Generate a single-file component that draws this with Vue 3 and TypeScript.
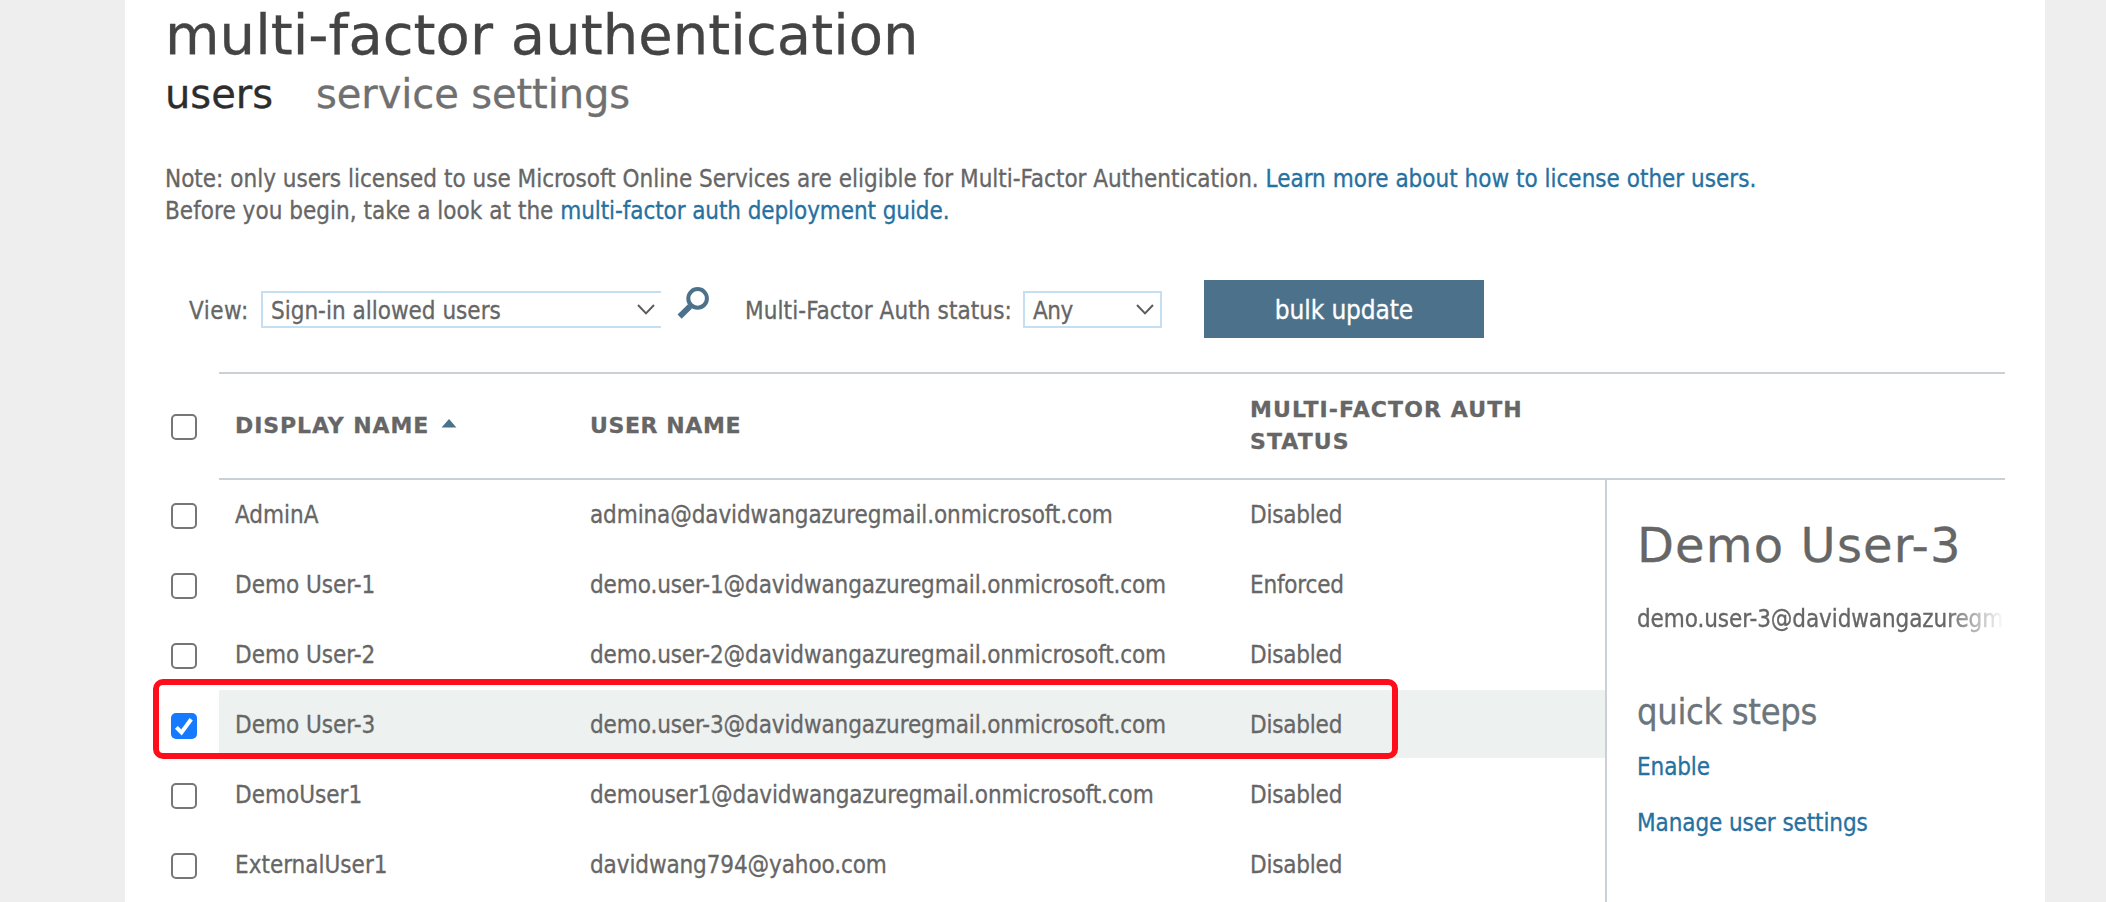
<script setup lang="ts">
import { computed, ref } from 'vue'

interface User {
  name: string
  email: string
  status: 'Disabled' | 'Enforced' | 'Enabled'
}

const users: User[] = [
  { name: 'AdminA', email: 'admina@davidwangazuregmail.onmicrosoft.com', status: 'Disabled' },
  { name: 'Demo User-1', email: 'demo.user-1@davidwangazuregmail.onmicrosoft.com', status: 'Enforced' },
  { name: 'Demo User-2', email: 'demo.user-2@davidwangazuregmail.onmicrosoft.com', status: 'Disabled' },
  { name: 'Demo User-3', email: 'demo.user-3@davidwangazuregmail.onmicrosoft.com', status: 'Disabled' },
  { name: 'DemoUser1', email: 'demouser1@davidwangazuregmail.onmicrosoft.com', status: 'Disabled' },
  { name: 'ExternalUser1', email: 'davidwang794@yahoo.com', status: 'Disabled' },
]

const selectedIndex = ref(3)
const selected = computed(() => users[selectedIndex.value])
</script>

<template>
  <div class="page">
    <main class="sheet">
      <h1 class="title">multi-factor authentication</h1>
      <nav class="tabs">
        <a class="tab active">users</a>
        <a class="tab settings">service settings</a>
      </nav>

      <div class="note">
        <p>Note: only users licensed to use Microsoft Online Services are eligible for Multi-Factor Authentication. <a class="learn">Learn more about how to license other users.</a></p>
        <p><span class="before">Before you begin, take a look at the</span> <a class="guide">multi-factor auth deployment guide.</a></p>
      </div>

      <div class="toolbar">
        <span class="label view-label">View:</span>
        <div class="select select-view">
          <span>Sign-in allowed users</span>
          <svg class="chevron" width="18" height="11" viewBox="0 0 18 11"><path d="M1 1 L9 9.4 L17 1" /></svg>
        </div>
        <svg class="search" width="34" height="34" viewBox="0 0 34 34">
          <path d="M3.6 30.6 L14 20.4" stroke-width="5.8" />
          <circle cx="21.6" cy="12.4" r="9.3" stroke-width="4" />
        </svg>
        <span class="label status-label">Multi-Factor Auth status:</span>
        <div class="select select-status">
          <span class="any">Any</span>
          <svg class="chevron" width="18" height="11" viewBox="0 0 18 11"><path d="M1 1 L9 9.4 L17 1" /></svg>
        </div>
        <button class="bulk" type="button">bulk update</button>
      </div>

      <div class="head">
        <span class="check-cell"><i class="check" /></span>
        <div class="head-cells">
          <span class="col-name">
            DISPLAY NAME
            <svg class="sort" width="16" height="9" viewBox="0 0 16 9"><path d="M8 0 L15.4 8.4 L0.6 8.4 Z" /></svg>
          </span>
          <span class="col-email">USER NAME</span>
          <span class="col-status">MULTI-FACTOR AUTH<br>STATUS</span>
        </div>
      </div>

      <div class="body">
        <div class="rows">
          <div
            v-for="(user, i) in users"
            :key="user.email"
            class="row"
            :class="{ selected: i === selectedIndex }"
            @click="selectedIndex = i"
          >
            <span class="check-cell">
              <i class="check" :class="{ checked: i === selectedIndex }">
                <svg v-if="i === selectedIndex" width="26" height="26" viewBox="0 0 26 26"><path d="M5.4 14.4 L10.5 19.4 L20.2 6.2" /></svg>
              </i>
            </span>
            <div class="cells">
              <span class="col-name">{{ user.name }}</span>
              <span class="col-email">{{ user.email }}</span>
              <span class="col-status">{{ user.status }}</span>
            </div>
            <div v-if="i === selectedIndex" class="marker" />
          </div>
        </div>

        <aside class="details">
          <h2>{{ selected.name }}</h2>
          <p class="email">{{ selected.email }}</p>
          <h3>quick steps</h3>
          <a class="step">Enable</a>
          <a class="step">Manage user settings</a>
        </aside>
      </div>
    </main>
  </div>
</template>

<style>
body {
  background: #eee;
  overflow: hidden;
}
</style>

<style scoped>
.page {
  box-sizing: border-box;
  width: 2106px;
  height: 902px;
  padding: 0 61px 0 125px;
  overflow: hidden;
  background: #eee;
  color: #666;
  font: 24px/32px "DejaVu Sans Condensed", "DejaVu Sans", Tahoma, sans-serif;
  -webkit-text-stroke-width: 0.3px;
}
h1, h2, h3, p {
  margin: 0;
  font-weight: normal;
}
a {
  color: #26719f;
  cursor: pointer;
}
.sheet {
  box-sizing: border-box;
  height: 902px;
  padding: 3px 40px 0;
  overflow: hidden;
  background: #fff;
}
.title {
  font: 56px/64px "DejaVu Sans", Verdana, sans-serif;
  letter-spacing: 0.05px;
  color: #444;
}
.tabs {
  display: flex;
  gap: 43px;
  margin-top: 3px;
  font: 40px/48px "DejaVu Sans", Verdana, sans-serif;
}
.tab {
  color: #707070;
  letter-spacing: -0.1px;
}
.tab.active {
  color: #2d2d2d;
  letter-spacing: 0;
}
.note {
  height: 64px;
  margin-top: 45px;
  white-space: nowrap;
}
.before {
  letter-spacing: 0.03px;
}
.guide {
  letter-spacing: -0.09px;
}
.toolbar {
  display: flex;
  align-items: center;
  height: 58px;
  margin-top: 53px;
}
.label {
  padding-top: 4px;
  white-space: nowrap;
}
.view-label {
  width: 72px;
  margin-left: 24px;
  letter-spacing: 0.5px;
}
.select {
  box-sizing: border-box;
  display: flex;
  align-items: center;
  justify-content: space-between;
  height: 37px;
  margin-top: 1px;
  padding: 3px 6px 0 8px;
  border: 2px solid #c5dff2;
}
.select-view {
  width: 400px;
  border-right: 0;
}
.chevron {
  margin-top: -4px;
  fill: none;
  stroke: #5c5c5c;
  stroke-width: 2;
}
.search {
  margin: -12px 0 0 15px;
  fill: none;
  stroke: #4c728b;
}
.status-label {
  width: 278px;
  margin-left: 35px;
  letter-spacing: 0.1px;
}
.select-status {
  width: 139px;
}
.any {
  letter-spacing: -0.5px;
}
.bulk {
  width: 280px;
  height: 58px;
  margin-left: 42px;
  padding: 2px 0 0;
  border: 0;
  background: #4c728b;
  color: #fff;
  font: 26px/32px "DejaVu Sans Condensed", "DejaVu Sans", Tahoma, sans-serif;
  letter-spacing: -0.12px;
}
.head {
  display: flex;
  margin-top: 34px;
}
.check-cell {
  box-sizing: border-box;
  flex: none;
  width: 54px;
  padding: 23px 0 0 6px;
}
.head .check-cell {
  padding-top: 42px;
}
.check {
  box-sizing: border-box;
  display: block;
  width: 26px;
  height: 26px;
  border: 2px solid #767676;
  border-radius: 5px;
}
.check.checked {
  border: 0;
  background: #167aff;
}
.check svg {
  display: block;
  fill: none;
  stroke: #fff;
  stroke-width: 4;
}
.head-cells {
  box-sizing: border-box;
  display: flex;
  flex: 1;
  align-items: center;
  height: 108px;
  padding-left: 16px;
  border: solid #cad0d4;
  border-width: 2px 0;
  font: bold 22px/32px "DejaVu Sans", Verdana, sans-serif;
  white-space: nowrap;
}
.head-cells .col-name {
  letter-spacing: 0.9px;
}
.head-cells .col-email {
  letter-spacing: 0.6px;
}
.head-cells .col-status {
  letter-spacing: 1.1px;
}
.sort {
  margin-left: 3px;
  vertical-align: 5px;
  fill: #4c728b;
}
.col-name {
  flex: none;
  width: 355px;
}
.col-email {
  flex: none;
  width: 660px;
}
.cells .col-email {
  letter-spacing: -0.11px;
}
.cells .col-status {
  letter-spacing: -0.2px;
}
.body {
  display: flex;
  height: 422px;
}
.rows {
  flex: none;
  width: 1440px;
}
.row {
  position: relative;
  display: flex;
  height: 70px;
}
.cells {
  box-sizing: border-box;
  display: flex;
  flex: 1;
  height: 68px;
  padding-left: 16px;
  line-height: 70px;
  white-space: nowrap;
}
.row.selected .cells {
  background: #edf1f0;
}
/* Callout drawn over the selected row */
.marker {
  position: absolute;
  box-sizing: border-box;
  top: -11px;
  left: -12px;
  width: 1245px;
  height: 80px;
  border: 6px solid #fe0d1b;
  border-radius: 10px;
}
.details {
  flex: 1;
  min-width: 0;
  padding: 33px 0 0 30px;
  border-left: 2px solid #cad0d4;
  white-space: nowrap;
}
.details h2 {
  font: 48px/64px "DejaVu Sans", Verdana, sans-serif;
  letter-spacing: 1.15px;
}
.email {
  margin-top: 26px;
  overflow: hidden;
  letter-spacing: -0.09px;
  mask-image: linear-gradient(to right, #000 calc(100% - 60px), transparent);
}
.details h3 {
  margin-top: 53px;
  font-size: 36px;
  line-height: 48px;
  letter-spacing: -0.35px;
  color: #6b757c;
}
.step {
  display: block;
  margin-top: 24px;
  letter-spacing: -0.1px;
}
h3 + .step {
  margin-top: 15px;
}
</style>
